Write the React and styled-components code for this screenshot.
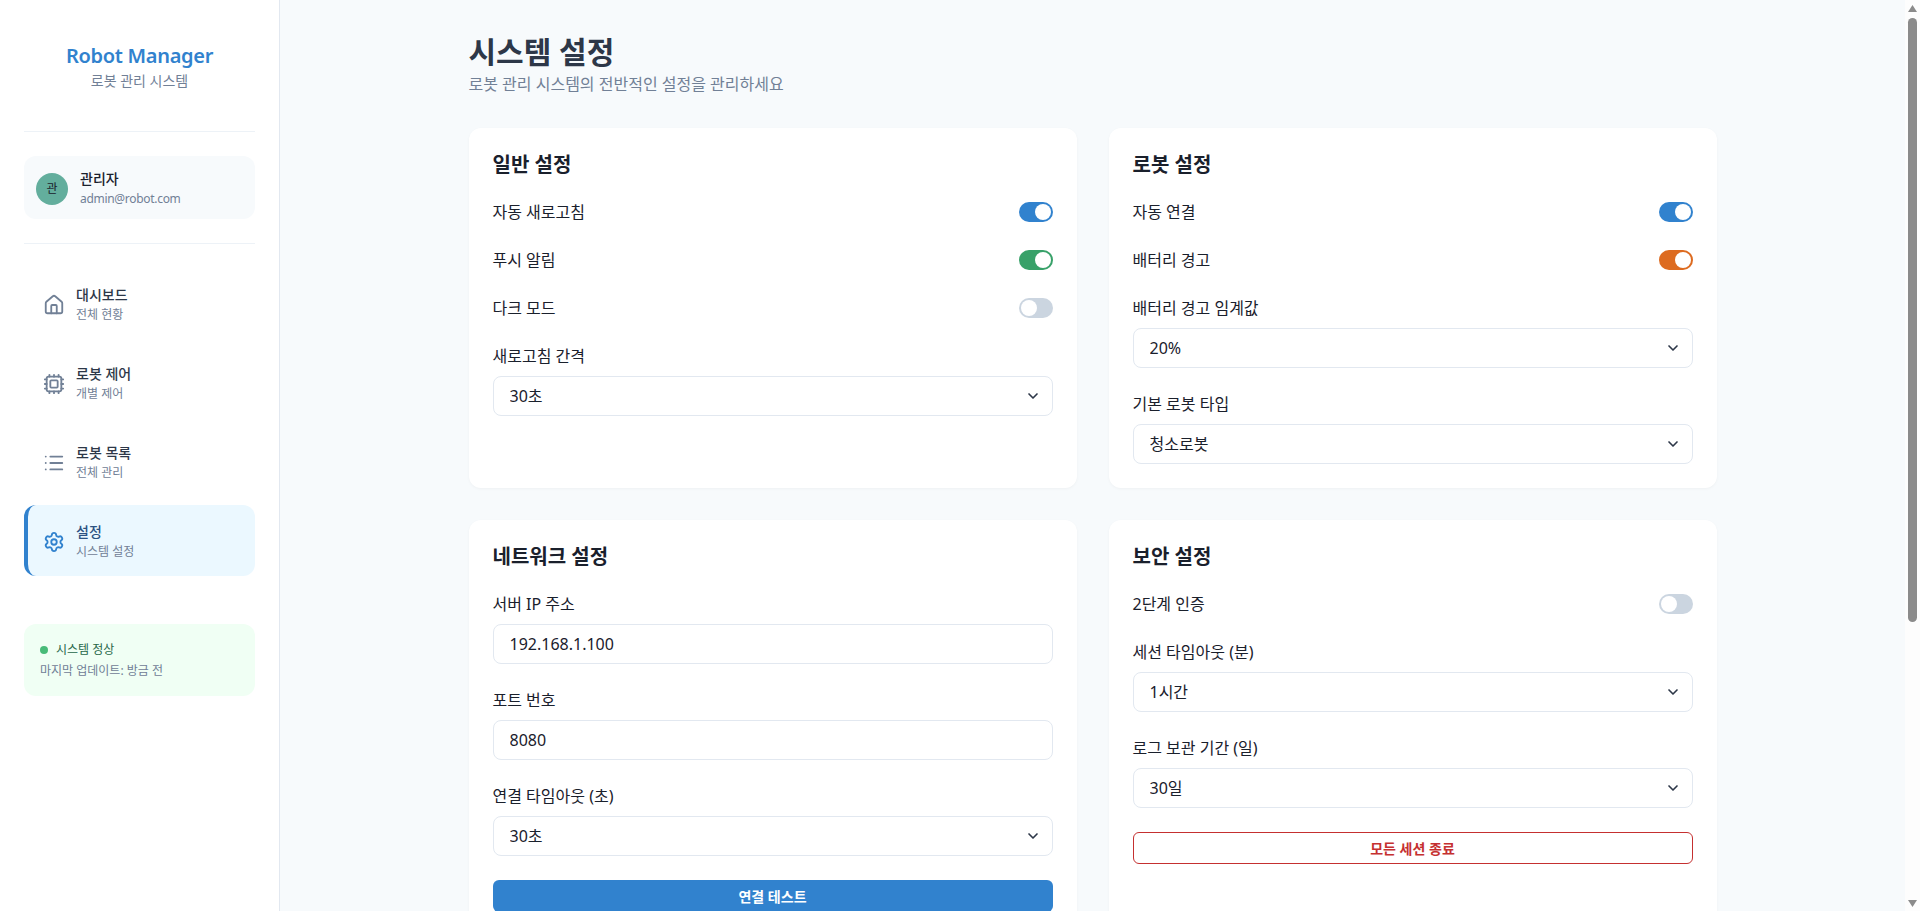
import styled, { createGlobalStyle } from 'styled-components';
import { useState } from 'react';
import { House, Cpu, List, Settings, ChevronDown } from 'lucide-react';

const GlobalStyle = createGlobalStyle`
  * { box-sizing: border-box; }
  body {
    margin: 0;
    background: #f7fafc;
    font-family: "Noto Sans", "Noto Sans CJK KR", sans-serif;
    color: #1a202c;
    line-height: 1.5;
  }
`;

const Layout = styled.div`
  display: flex;
  align-items: flex-start;
  padding-right: 15px;
`;

const ScrollRail = styled.div`
  position: fixed;
  top: 0;
  right: 0;
  bottom: 0;
  display: flex;
  flex-direction: column;
  align-items: center;
  justify-content: space-between;
  width: 15px;
  padding: 5px 0 4px;
  background: #fdfdfd;
`;

const ScrollThumb = styled.div`
  position: absolute;
  top: 18px;
  left: 3px;
  width: 9px;
  height: 604px;
  border-radius: 5px;
  background: #8b8b8b;
`;

const ScrollArrow = styled.svg`
  display: block;
  width: 9px;
  height: 7px;
  fill: #8b8b8b;
`;

const Sidebar = styled.aside`
  position: sticky;
  top: 0;
  flex: 0 0 280px;
  height: 100vh;
  padding: 40px 24px 24px;
  background: #fff;
  border-right: 1px solid #e2e8f0;
`;

const Brand = styled.div`
  text-align: center;
  padding-bottom: 40px;
  border-bottom: 1px solid #edf2f7;
`;

const BrandName = styled.h2`
  margin: 0 0 -2px;
  font-size: 20px;
  line-height: 32px;
  font-weight: 600;
  letter-spacing: -0.3px;
  color: #3182ce;
`;

const BrandSub = styled.p`
  margin: 0;
  font-size: 14px;
  line-height: 21px;
  color: #718096;
`;

const UserCard = styled.div`
  display: flex;
  align-items: center;
  gap: 12px;
  margin-top: 24px;
  padding: 12px 12px 10px;
  background: #f7fafc;
  border-radius: 12px;
`;

const Avatar = styled.div`
  display: flex;
  align-items: center;
  justify-content: center;
  width: 32px;
  height: 32px;
  border-radius: 50%;
  background: #63ae9d;
  font-size: 12px;
  color: #1a202c;
`;

const UserName = styled.div`
  font-size: 14px;
  line-height: 21px;
  font-weight: 500;
  color: #1a202c;
`;

const UserMail = styled.div`
  font-size: 12px;
  line-height: 20px;
  letter-spacing: -0.3px;
  color: #718096;
`;

const Divider = styled.hr`
  margin: 24px 0;
  border: 0;
  border-top: 1px solid #edf2f7;
`;

const Nav = styled.nav`
  display: flex;
  flex-direction: column;
  gap: 8px;
`;

const NavItem = styled.a`
  display: flex;
  align-items: center;
  gap: 12px;
  padding: 16px 16px 14px;
  border-left: 4px solid ${(p) => (p.$active ? '#3182ce' : 'transparent')};
  border-radius: 12px;
  background: ${(p) => (p.$active ? '#ebf8ff' : 'transparent')};
  color: ${(p) => (p.$active ? '#3182ce' : '#718096')};
  svg { margin: 0 -1px; }
`;

const NavTitle = styled.div`
  font-size: 14px;
  line-height: 21px;
  font-weight: 500;
  color: ${(p) => (p.$active ? '#2c5282' : '#2d3748')};
`;

const NavSub = styled.div`
  font-size: 12px;
  line-height: 20px;
  color: #718096;
`;

const StatusCard = styled.div`
  margin-top: 48px;
  padding: 17px 16px 16px;
  background: #f0fff4;
  border-radius: 12px;
`;

const StatusLine = styled.div`
  display: flex;
  align-items: center;
  gap: 8px;
  margin-bottom: 3px;
  font-size: 12px;
  line-height: 18px;
  color: #276749;
`;

const Dot = styled.span`
  width: 8px;
  height: 8px;
  border-radius: 50%;
  background: #48bb78;
`;

const StatusTime = styled.div`
  font-size: 12px;
  line-height: 18px;
  color: #718096;
`;

const Main = styled.main`
  flex: 1;
  min-width: 0;
  min-height: 1323px;
  padding: 32px 0;
`;

const Content = styled.div`
  width: 1248px;
  margin: 0 auto;
`;

const PageTitle = styled.h1`
  margin: 0;
  font-size: 30px;
  line-height: 40px;
  font-weight: 700;
  color: #2d3748;
`;

const PageSub = styled.p`
  margin: 0 0 32px;
  font-size: 16px;
  line-height: 24px;
  color: #718096;
`;

const Grid = styled.div`
  display: grid;
  grid-template-columns: 1fr 1fr;
  gap: 32px;
`;

const Card = styled.section`
  padding: 24px;
  background: #fff;
  border-radius: 12px;
  box-shadow: 0 1px 3px rgba(0, 0, 0, 0.04);
`;

const CardTitle = styled.h3`
  margin: 0 0 22px;
  font-size: 20px;
  line-height: 26px;
  font-weight: 600;
  color: #1a202c;
`;

const ToggleRow = styled.div`
  display: flex;
  align-items: center;
  justify-content: space-between;
  margin-bottom: 24px;
`;

const Label = styled.label`
  display: block;
  font-size: 16px;
  line-height: 24px;
  color: #1a202c;
`;

const Track = styled.button`
  display: flex;
  justify-content: ${(p) => (p.$on ? 'flex-end' : 'flex-start')};
  width: 34px;
  height: 20px;
  padding: 2px;
  border: 0;
  border-radius: 10px;
  background: ${(p) => (p.$on ? p.$color : '#cbd5e0')};
  cursor: pointer;
`;

const Knob = styled.span`
  width: 16px;
  height: 16px;
  border-radius: 50%;
  background: #fff;
`;

const Field = styled.div`
  margin-bottom: 24px;
  &:last-child { margin-bottom: 0; }
  ${Label} { margin-bottom: 8px; }
`;

const TextInput = styled.input`
  display: block;
  width: 100%;
  height: 40px;
  padding: 0 16px;
  border: 1px solid #e2e8f0;
  border-radius: 8px;
  background: #fff;
  font: inherit;
  font-size: 16px;
  color: #1a202c;
`;

const SelectWrap = styled.div`
  position: relative;
`;

const SelectBox = styled.select`
  display: block;
  width: 100%;
  height: 40px;
  padding: 0 16px;
  border: 1px solid #e2e8f0;
  border-radius: 8px;
  background: #fff;
  font: inherit;
  font-size: 16px;
  color: #1a202c;
  appearance: none;
`;

const Chevron = styled(ChevronDown)`
  position: absolute;
  top: 12px;
  right: 12px;
  pointer-events: none;
  color: #2d3748;
`;

const PrimaryButton = styled.button`
  display: block;
  width: 100%;
  height: 32px;
  border: 0;
  border-radius: 6px;
  background: #3182ce;
  font: inherit;
  font-size: 14px;
  font-weight: 700;
  color: #fff;
`;

const DangerButton = styled.button`
  display: block;
  width: 100%;
  height: 32px;
  border: 1px solid #c53030;
  border-radius: 6px;
  background: #fff;
  font: inherit;
  font-size: 14px;
  font-weight: 700;
  color: #c53030;
`;

const navItems = [
  { title: '대시보드', sub: '전체 현황', Icon: House },
  { title: '로봇 제어', sub: '개별 제어', Icon: Cpu },
  { title: '로봇 목록', sub: '전체 관리', Icon: List },
  { title: '설정', sub: '시스템 설정', Icon: Settings, active: true },
];

function Toggle({ label, on, color = '#3182ce' }) {
  const [value, setValue] = useState(on);
  return (
    <ToggleRow>
      <Label>{label}</Label>
      <Track type="button" $on={value} $color={color} onClick={() => setValue(!value)}>
        <Knob />
      </Track>
    </ToggleRow>
  );
}

function SelectField({ label, value }) {
  return (
    <Field>
      <Label>{label}</Label>
      <SelectWrap>
        <SelectBox defaultValue={value}>
          <option>{value}</option>
        </SelectBox>
        <Chevron size={16} strokeWidth={2.5} />
      </SelectWrap>
    </Field>
  );
}

function InputField({ label, value }) {
  return (
    <Field>
      <Label>{label}</Label>
      <TextInput defaultValue={value} />
    </Field>
  );
}

export default function App() {
  return (
    <>
      <GlobalStyle />
      <Layout>
        <Sidebar>
          <Brand>
            <BrandName>Robot Manager</BrandName>
            <BrandSub>로봇 관리 시스템</BrandSub>
          </Brand>
          <UserCard>
            <Avatar>관</Avatar>
            <div>
              <UserName>관리자</UserName>
              <UserMail>admin@robot.com</UserMail>
            </div>
          </UserCard>
          <Divider />
          <Nav>
            {navItems.map(({ title, sub, Icon, active }) => (
              <NavItem key={title} $active={active}>
                <Icon size={22} strokeWidth={2} />
                <div>
                  <NavTitle $active={active}>{title}</NavTitle>
                  <NavSub>{sub}</NavSub>
                </div>
              </NavItem>
            ))}
          </Nav>
          <StatusCard>
            <StatusLine>
              <Dot />
              시스템 정상
            </StatusLine>
            <StatusTime>마지막 업데이트: 방금 전</StatusTime>
          </StatusCard>
        </Sidebar>
        <Main>
          <Content>
            <PageTitle>시스템 설정</PageTitle>
            <PageSub>로봇 관리 시스템의 전반적인 설정을 관리하세요</PageSub>
            <Grid>
              <Card>
                <CardTitle>일반 설정</CardTitle>
                <Toggle label="자동 새로고침" on />
                <Toggle label="푸시 알림" on color="#38a169" />
                <Toggle label="다크 모드" />
                <SelectField label="새로고침 간격" value="30초" />
              </Card>
              <Card>
                <CardTitle>로봇 설정</CardTitle>
                <Toggle label="자동 연결" on />
                <Toggle label="배터리 경고" on color="#dd6b20" />
                <SelectField label="배터리 경고 임계값" value="20%" />
                <SelectField label="기본 로봇 타입" value="청소로봇" />
              </Card>
              <Card>
                <CardTitle>네트워크 설정</CardTitle>
                <InputField label="서버 IP 주소" value="192.168.1.100" />
                <InputField label="포트 번호" value="8080" />
                <SelectField label="연결 타임아웃 (초)" value="30초" />
                <PrimaryButton type="button">연결 테스트</PrimaryButton>
              </Card>
              <Card>
                <CardTitle>보안 설정</CardTitle>
                <Toggle label="2단계 인증" />
                <SelectField label="세션 타임아웃 (분)" value="1시간" />
                <SelectField label="로그 보관 기간 (일)" value="30일" />
                <DangerButton type="button">모든 세션 종료</DangerButton>
              </Card>
            </Grid>
          </Content>
        </Main>
      </Layout>
      <ScrollRail>
        <ScrollArrow viewBox="0 0 9 7"><path d="M4.5 0L9 7H0z" /></ScrollArrow>
        <ScrollThumb />
        <ScrollArrow viewBox="0 0 9 7"><path d="M4.5 7L0 0h9z" /></ScrollArrow>
      </ScrollRail>
    </>
  );
}
